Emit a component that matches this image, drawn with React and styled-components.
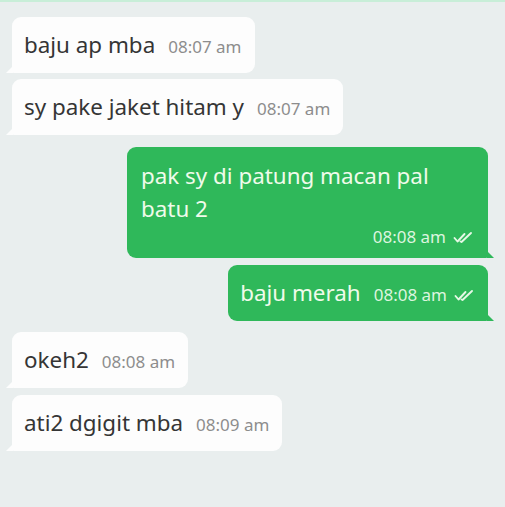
import React from 'react';
import styled, { createGlobalStyle, css } from 'styled-components';

const GlobalStyle = createGlobalStyle`
  html, body {
    margin: 0;
    padding: 0;
    background: #e9eeee;
  }
  body {
    font-family: "Noto Sans", Roboto, sans-serif;
  }
`;

const Screen = styled.div`
  width: 505px;
  height: 507px;
  box-sizing: border-box;
  border-top: 2px solid #c8eed8;
  background: #e9eeee;
  padding: 15px 17px 0 12px;
  display: flex;
  flex-direction: column;
  overflow: hidden;
`;

const Row = styled.div`
  display: flex;
  justify-content: ${(p) => (p.$out ? 'flex-end' : 'flex-start')};
  margin-top: ${(p) => p.$gap}px;
`;

const Bubble = styled.div`
  position: relative;
  display: flex;
  flex-direction: ${(p) => (p.$stack ? 'column' : 'row')};
  align-items: ${(p) => (p.$stack ? 'stretch' : 'baseline')};
  gap: ${(p) => (p.$stack ? '0' : '13px')};
  box-sizing: border-box;
  max-width: 361px;
  min-height: 56px;
  padding: ${(p) => (p.$stack ? '12px 14px 9px' : '11px 13px 0 12px')};
  border-radius: 9px;
  ${(p) =>
    p.$out
      ? css`
          background: #2fb85a;
          color: #f0fbea;
          border-bottom-right-radius: 2px;
          &::after {
            content: '';
            position: absolute;
            right: -6px;
            bottom: 0;
            border-left: 7px solid #2fb85a;
            border-top: 7px solid transparent;
          }
        `
      : css`
          background: #fdfdfd;
          color: #353535;
          border-bottom-left-radius: 2px;
          &::after {
            content: '';
            position: absolute;
            left: -6px;
            bottom: 0;
            border-right: 7px solid #fdfdfd;
            border-top: 7px solid transparent;
          }
        `}
`;

const Text = styled.span`
  font-size: 22.4px;
  line-height: 33px;
`;

const Meta = styled.span`
  display: flex;
  align-items: center;
  justify-content: flex-end;
  gap: 7px;
  font-size: 17px;
  line-height: 24px;
  white-space: nowrap;
  color: ${(p) => (p.$out ? '#dcf5df' : '#8d8d8d')};
`;

const Ticks = () => (
  <svg width="21" height="13" viewBox="0 0 21 13" fill="none" stroke="#e6f8e6" strokeWidth="1.9" strokeLinecap="round" strokeLinejoin="round">
    <path d="M1.5 7 L4.5 10.5 L11.5 3" />
    <path d="M7.5 10.5 L8.5 11 L18 2" />
  </svg>
);

const messages = [
  { text: 'baju ap mba', time: '08:07 am', gap: 0 },
  { text: 'sy pake jaket hitam y', time: '08:07 am', gap: 6 },
  { text: 'pak sy di patung macan pal batu 2', time: '08:08 am', gap: 12, out: true, stack: true },
  { text: 'baju merah', time: '08:08 am', gap: 7, out: true },
  { text: 'okeh2', time: '08:08 am', gap: 11 },
  { text: 'ati2 dgigit mba', time: '08:09 am', gap: 7 },
];

const App = () => (
  <>
    <GlobalStyle />
    <Screen>
      {messages.map((m, i) => (
        <Row key={i} $out={m.out} $gap={m.gap}>
          <Bubble $out={m.out} $stack={m.stack}>
            <Text>{m.text}</Text>
            <Meta $out={m.out}>
              {m.time}
              {m.out && <Ticks />}
            </Meta>
          </Bubble>
        </Row>
      ))}
    </Screen>
  </>
);

export default App;
